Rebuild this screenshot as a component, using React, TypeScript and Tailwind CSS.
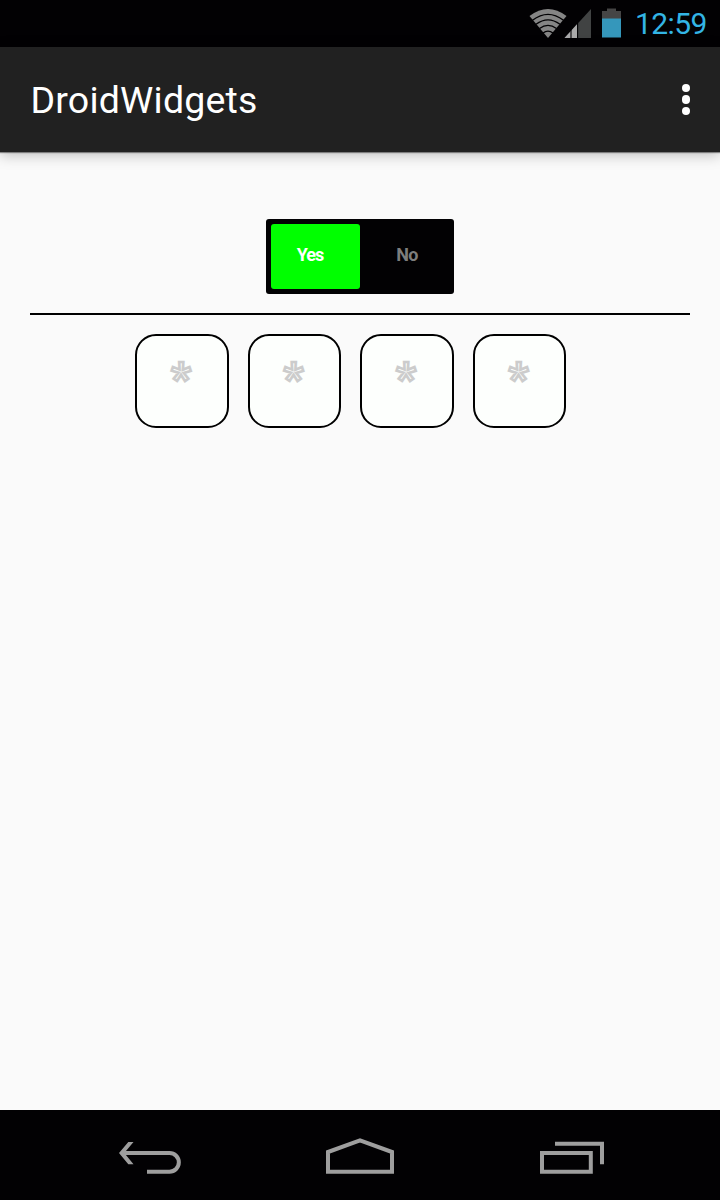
import React from "react";

function StatusBar() {
  return (
    <header className="flex h-[47px] shrink-0 items-start justify-end bg-[#020103] pr-[12px] text-[#33b5e5]">
      <svg className="mt-[8px]" width="97" height="31" viewBox="0 0 97 31" aria-hidden="true">
        <path d="M4.5 8Q23 -6 41.5 8L23 30Z" fill="#858585" />
        <g fill="none" stroke="#020103" strokeWidth="1.4">
          <path d="M7.5 12.3Q23 0.5 38.5 12.3" />
          <path d="M11 16.3Q23 7.5 35 16.3" />
          <path d="M14.5 20.5Q23 14.3 31.5 20.5" />
          <path d="M18 25Q23 21.2 28 25" />
        </g>
        <path d="M39.5 30L66 1V30Z" fill="#414343" />
        <path d="M39.5 30L52.2 16V30Z" fill="#aaa" />
        <path d="M46 22V30M52.6 15V30" stroke="#020103" strokeWidth="1.1" />
        <path d="M77 11V3H82V0.5H91V3H96V11Z" fill="#454545" />
        <path d="M77 10.5H96V29.5H77Z" fill="#3597bb" />
      </svg>
      <time className="ml-[13px] mr-[-0.6px] mt-[8px] w-[73.6px] whitespace-nowrap text-[30px] leading-[32px] tracking-[-0.6px]">
        12:59
      </time>
    </header>
  );
}

function AppBar() {
  return (
    <div className="relative flex h-[105px] shrink-0 items-center justify-between bg-[#212121] pl-[30.5px] pr-[30px] shadow-[0_1px_1px_rgba(0,0,0,0.4),0_3px_13px_rgba(0,0,0,0.25)]">
      <h1 className="text-[37.5px] leading-[44px] tracking-[0.2px] text-white">DroidWidgets</h1>
      <button className="flex flex-col gap-[3px]" aria-label="More options">
        <i className="size-[8.2px] rounded-full bg-white" />
        <i className="size-[8.2px] rounded-full bg-white" />
        <i className="size-[8.2px] rounded-full bg-white" />
      </button>
    </div>
  );
}

function YesNoSwitch() {
  return (
    <div className="mx-auto flex h-[75px] w-[188px] rounded-[3px] bg-[#020103] p-[5px] text-[18px] font-bold leading-5">
      <div className="flex w-[89px] justify-center rounded-[3px] bg-[#00ff00] pr-[11px] pt-[21px] text-white">
        <span className="tracking-[-1px]">Yes</span>
      </div>
      <div className="flex w-[89px] justify-center pt-[21px] text-[#7d7d7d]">
        <span className="pl-[5px] tracking-[-0.7px]">No</span>
      </div>
    </div>
  );
}

function PinEntry() {
  return (
    <div className="ml-[105px] flex gap-[18.75px]">
      {[0, 1, 2, 3].map((cell) => (
        <div
          key={cell}
          className="flex size-[93.75px] justify-center rounded-[21px] border-2 border-black bg-[#fdfffd] pr-[2px] pt-[19px]"
        >
          <span className="text-[44px] font-bold leading-[48px] text-[#fdfffd] [-webkit-text-stroke:2.6px_#cccccc]">*</span>
        </div>
      ))}
    </div>
  );
}

function NavigationBar() {
  return (
    <nav className="flex h-[90px] shrink-0 bg-[#020103] pl-[118px] pt-[27px]">
      <svg width="64" height="40" viewBox="0 0 64 40" aria-hidden="true">
        <path d="M3 16H51.5A9.35 9.35 0 0 1 51.5 34.7H29" fill="none" stroke="#9e9e9e" strokeWidth="4" />
        <path d="M10.3 5H15.5L6.3 16L15.5 27.3H10.3L1 16Z" fill="#9e9e9e" />
      </svg>
      <svg className="ml-[142px]" width="72" height="40" viewBox="0 0 72 40" fill="none" stroke="#9e9e9e" strokeWidth="4" aria-hidden="true">
        <path d="M4 34.7V15L36 3.3L68 15V34.7Z" />
      </svg>
      <svg className="ml-[142px]" width="68" height="40" viewBox="0 0 68 40" fill="none" stroke="#9e9e9e" strokeWidth="4" aria-hidden="true">
        <path d="M4 16H52.8V34.7H4Z" />
        <path d="M17 6.8H64V27.3" />
      </svg>
    </nav>
  );
}

export default function App() {
  return (
    <div className="flex h-[1200px] w-[720px] flex-col overflow-hidden bg-[#fafafa] font-[Roboto,sans-serif]">
      <StatusBar />
      <AppBar />
      <main className="flex-1 px-[30px] pt-[67px]">
        <YesNoSwitch />
        <hr className="mb-[19px] mt-[19px] h-[2px] border-0 bg-black" />
        <PinEntry />
      </main>
      <NavigationBar />
    </div>
  );
}
